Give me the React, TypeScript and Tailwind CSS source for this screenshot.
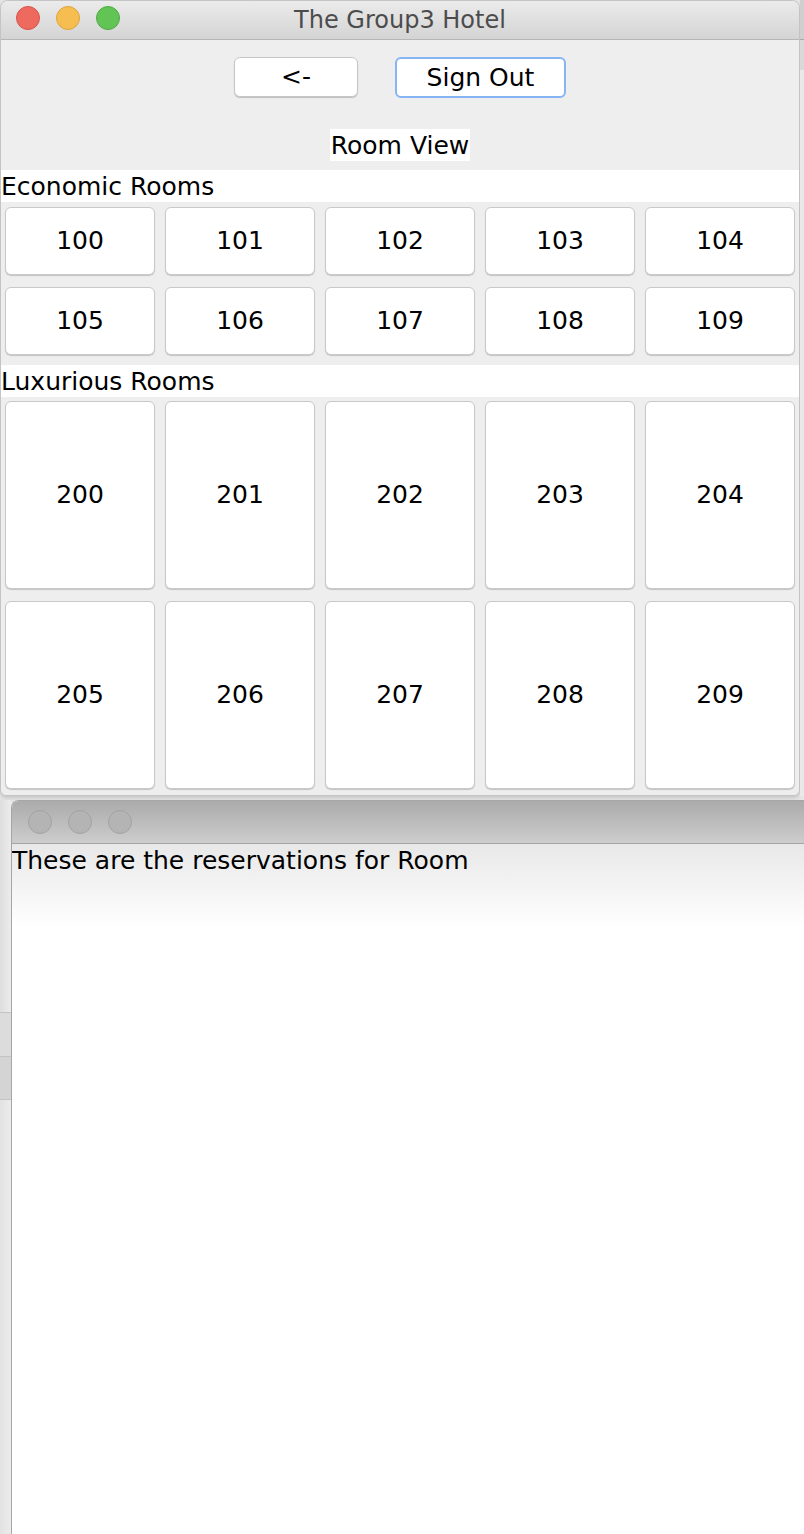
import React from "react";

const font = { fontFamily: '"DejaVu Sans", "Liberation Sans", sans-serif' };

function RoomButton({ n, tall }: { n: number; tall?: boolean }) {
  return (
    <div
      className={`flex items-center justify-center bg-white border border-[#c9c9c9] rounded-[6px] shadow-[0_1px_1px_rgba(0,0,0,0.18)] text-[25px] text-black ${
        tall ? "h-[188px]" : "h-[68px]"
      }`}
    >
      {n}
    </div>
  );
}

export default function App() {
  const eco = [100, 101, 102, 103, 104, 105, 106, 107, 108, 109];
  const lux = [200, 201, 202, 203, 204, 205, 206, 207, 208, 209];
  return (
    <div className="w-[804px] h-[1534px] overflow-hidden bg-[#e6e6e6] flex flex-col" style={font}>
      {/* top row: main window + right strip */}
      <div className="flex">
        <div className="w-[800px] h-[796px] bg-[#eeeeee] rounded-t-[8px] rounded-b-[6px] border border-[#c4c4c4] flex flex-col overflow-hidden shadow-[0_2px_4px_rgba(0,0,0,0.15)]">
          {/* title bar */}
          <div className="relative h-[39px] bg-gradient-to-b from-[#ebebeb] to-[#d4d4d4] border-b border-[#b6b6b6] flex items-center justify-center shrink-0">
            <div className="absolute left-[15px] top-[5px] flex gap-[16px]">
              <div className="w-[24px] h-[24px] rounded-full bg-[#ee6a5f] border border-[#d6544a]" />
              <div className="w-[24px] h-[24px] rounded-full bg-[#f6be50] border border-[#dca43b]" />
              <div className="w-[24px] h-[24px] rounded-full bg-[#61c455] border border-[#4fa944]" />
            </div>
            <span className="text-[24px] text-[#4c4c4c] mt-[-1px]">The Group3 Hotel</span>
          </div>
          {/* nav buttons */}
          <div className="flex justify-center gap-[37px] mt-[17px]">
            <div className="w-[124px] h-[40px] bg-white border border-[#c6c6c6] rounded-[6px] shadow-[0_1px_1px_rgba(0,0,0,0.2)] flex items-center justify-center text-[25px] text-black">
              &lt;-
            </div>
            <div className="w-[171px] h-[41px] bg-white border-2 border-[#85b5f2] rounded-[6px] flex items-center justify-center text-[25px] text-black">
              Sign Out
            </div>
          </div>
          <div className="flex justify-center mt-[31px]">
            <div className="bg-white h-[32px] px-[1px] pt-[1px] flex items-center text-[25px] text-black">Room View</div>
          </div>
          <div className="bg-white h-[32px] mt-[9px] pt-[2px] flex items-center text-[25px] text-black">Economic Rooms</div>
          <div className="grid grid-cols-5 gap-x-[10px] gap-y-[12px] px-[4px] mt-[5px]">
            {eco.map((n) => (
              <RoomButton key={n} n={n} />
            ))}
          </div>
          <div className="bg-white h-[32px] mt-[10px] pt-[2px] flex items-center text-[25px] text-black">Luxurious Rooms</div>
          <div className="grid grid-cols-5 gap-x-[10px] gap-y-[12px] px-[4px] mt-[4px]">
            {lux.map((n) => (
              <RoomButton key={n} n={n} tall />
            ))}
          </div>
        </div>
        <div className="flex-1 flex flex-col">
          <div className="h-[40px] bg-[#cfcfcf] border-b border-[#a9a9a9]" />
          <div className="h-[30px] bg-[#d9d9d9]" />
          <div className="flex-1 bg-[#e9e9e9]" />
        </div>
      </div>
      {/* bottom row: left strip + second window */}
      <div className="flex flex-1 mt-[4px]">
        <div className="w-[11px] flex flex-col">
          <div className="h-[212px] bg-gradient-to-r from-[#dedede] to-[#ececec]" />
          <div className="h-[44px] bg-[#dcdcdc] border-t border-[#c4c4c4]" />
          <div className="h-[44px] bg-[#d4d4d4] border-t border-[#c4c4c4] border-b" />
          <div className="flex-1 bg-gradient-to-r from-[#e2e2e2] to-[#ececec]" />
        </div>
        <div className="flex-1 flex flex-col bg-white rounded-tl-[8px] border-l border-t border-[#a6a6a6] overflow-hidden">
          <div className="h-[43px] shrink-0 bg-gradient-to-b from-[#ababab] to-[#cdcdcd] border-b border-[#a4a4a4] flex items-center pl-[16px] gap-[16px]">
            <div className="w-[24px] h-[24px] rounded-full bg-[#b4b4b4] border border-[#a3a3a3]" />
            <div className="w-[24px] h-[24px] rounded-full bg-[#b4b4b4] border border-[#a3a3a3]" />
            <div className="w-[24px] h-[24px] rounded-full bg-[#b4b4b4] border border-[#a3a3a3]" />
          </div>
          <div className="flex-1 bg-gradient-to-b from-[#e8e8e8] via-white via-[12%] to-white">
            <div className="text-[25px] text-black leading-[32px] mt-[1px]">These are the reservations for Room</div>
          </div>
        </div>
      </div>
    </div>
  );
}
